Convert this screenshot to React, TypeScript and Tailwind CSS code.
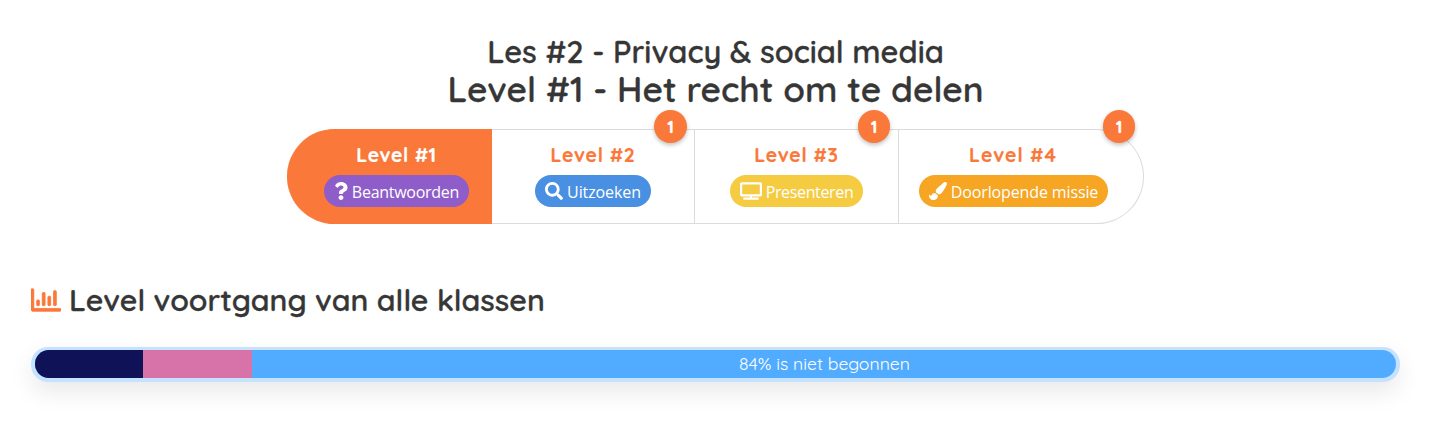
import type { IconType } from "react-icons";
import { FaPaintBrush, FaQuestion, FaRegChartBar, FaSearch, FaTv } from "react-icons/fa";

type Level = {
  title: string;
  label: string;
  icon: IconType;
  badge?: number;
  badgeClass?: string;
  cell: string;
  titleClass: string;
  pill: string;
  text: string;
  iconClass: string;
};

const levels: Level[] = [
  {
    title: "Level #1",
    label: "Beantwoorden",
    icon: FaQuestion,
    cell: "w-[205px] rounded-l-[48px] border-y border-[#fa7839] bg-[#fa7839] pl-3.5",
    titleClass: "text-white tracking-[0.55px]",
    pill: "w-[145px] bg-[#8e5dc9]",
    text: "tracking-[-0.27px] ml-[4px]",
    iconClass: "w-[14px]",
  },
  {
    title: "Level #2",
    label: "Uitzoeken",
    icon: FaSearch,
    badge: 1,
    badgeClass: "right-[7px] w-[33px]",
    cell: "w-[203px] border-y border-r border-[#dbdbdb]",
    titleClass: "text-[#fa7839] tracking-[0.7px]",
    pill: "w-[116px] bg-[#4a90e2]",
    text: "tracking-[-0.1px] ml-[4px]",
    iconClass: "w-[18px]",
  },
  {
    title: "Level #3",
    label: "Presenteren",
    icon: FaTv,
    badge: 1,
    badgeClass: "right-2 w-8",
    cell: "w-[204px] border-y border-r border-[#dbdbdb]",
    titleClass: "text-[#fa7839] tracking-[0.7px]",
    pill: "w-[133px] bg-[#f5cb41]",
    text: "tracking-[-0.35px] ml-[4px]",
    iconClass: "w-[22px]",
  },
  {
    title: "Level #4",
    label: "Doorlopende missie",
    icon: FaPaintBrush,
    badge: 1,
    badgeClass: "right-2 w-8",
    cell: "w-[245px] rounded-r-[48px] border-y border-r border-[#dbdbdb] pr-4",
    titleClass: "text-[#fa7839] tracking-[1px]",
    pill: "w-[189px] bg-[#f6a623] pl-px",
    text: "tracking-[-0.13px] ml-[4px]",
    iconClass: "w-[18px]",
  },
];

function LevelCell({ level }: { level: Level }) {
  const Icon = level.icon;
  return (
    <li className={`relative flex h-[95px] flex-col items-center ${level.cell}`}>
      <div
        className={`mt-[12px] h-[26px] text-[19.36px] leading-[26px] font-bold [-webkit-text-stroke:0.2px_currentColor] ${level.titleClass}`}
      >
        {level.title}
      </div>
      <div
        className={`mt-[7px] flex h-8 items-center justify-center rounded-full font-['Open_Sans',sans-serif] text-base text-white ${level.pill}`}
      >
        <Icon className={`h-[18px] shrink-0 ${level.iconClass}`} />
        <span className={`pt-px whitespace-nowrap ${level.text}`}>{level.label}</span>
      </div>
      {level.badge && (
        <span
          className={`absolute -top-5 flex h-[33px] items-center justify-center rounded-full bg-[#fa7839] text-base font-bold text-white shadow-[0_2px_4px_rgba(0,0,0,0.25)] [-webkit-text-stroke:0.4px_currentColor] ${level.badgeClass}`}
        >
          {level.badge}
        </span>
      )}
    </li>
  );
}

export default function App() {
  return (
    <main className="h-[443px] overflow-hidden bg-white pt-[33px] font-['Quicksand','Lato',sans-serif] text-[#363636]">
      <header className="flex flex-col items-center pr-[5px] font-semibold [-webkit-text-stroke:0.3px_currentColor]">
        <h2 className="text-[30.8px] leading-[37px]">Les #2 - Privacy &amp; social media</h2>
        <h1 className="text-[35.3px] leading-[38px]">Level #1 - Het recht om te delen</h1>
      </header>

      <ul className="mt-[21px] ml-[287px] flex">
        {levels.map((level) => (
          <LevelCell key={level.title} level={level} />
        ))}
      </ul>

      <section className="mt-[56px] pr-[36px] pl-[31px]">
        <h2 className="flex h-10 items-center text-[30.3px] font-semibold">
          <FaRegChartBar className="mr-[8px] size-[30px] stroke-current text-[#fa7839] [stroke-width:14px]" />
          <span className="pt-0.5 [-webkit-text-stroke:0.3px_currentColor]">Level voortgang van alle klassen</span>
        </h2>
        <div className="mt-[27px] h-[35px] rounded-[17px] bg-[#c5e2ff] px-1 pt-[3px] pb-1 shadow-[0_10px_24px_rgba(0,0,0,0.09)]">
          <div className="flex h-7 overflow-hidden rounded-[14px] bg-[#51acff] text-[17.6px] text-white">
            <div className="w-[108px] bg-[#101258]" />
            <div className="w-[109px] bg-[#d873aa]" />
            <div className="flex flex-1 items-center justify-center pb-0.5 pl-px">84% is niet begonnen</div>
          </div>
        </div>
      </section>
    </main>
  );
}
